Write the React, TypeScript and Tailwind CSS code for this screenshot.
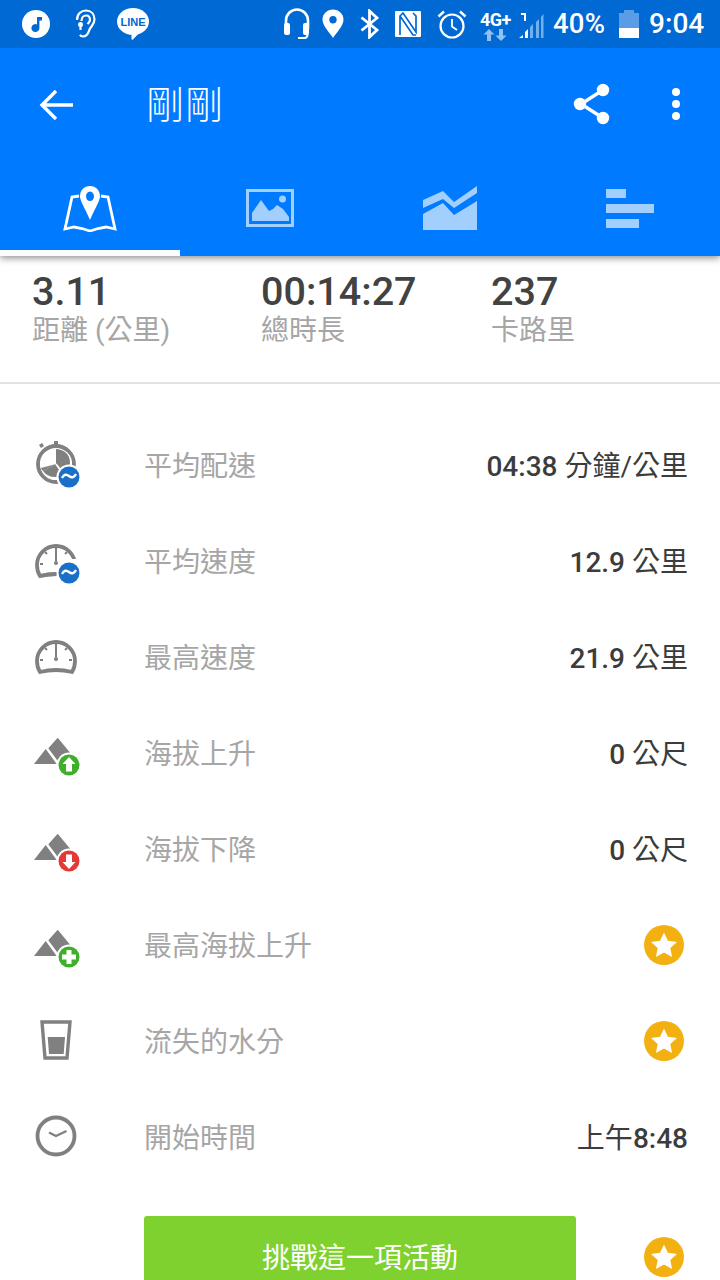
import React from 'react';

const FONT = "font-['Roboto','Noto_Sans_CJK_TC',sans-serif]";

function StatusBar() {
    return (
        <div className="h-[48px] bg-[#0069d3] flex items-center text-white">
            <svg width="28" height="28" viewBox="0 0 28 28" className="ml-[22px]">
                <circle cx="14" cy="14" r="14" fill="#fff" />
                <path d="M15 7h5v3.4h-2.6V18a4 4 0 1 1-2.4-3.6z" fill="#0069d3" />
            </svg>
            <svg width="22" height="30" viewBox="0 0 22 30" className="ml-[24px]" fill="none" stroke="#fff" strokeWidth="2.2">
                <path d="M3 11C3 5 7 1.500 12 1.500S20.500 5 20.500 10.500c0 5-3.500 6.500-5 10-1 3-2 7-6.500 7-1.500 0-2.500-.7-3-1.700" />
                <path d="M7.500 12c0-3.500 2-5.500 4.700-5.500S16 8.500 16 11c0 2-1.500 3-2.500 4" />
                <circle cx="6.500" cy="15.500" r="2.500" fill="#fff" stroke="none" />
                <path d="M6.500 15v6" />
            </svg>
            <svg width="32" height="32" viewBox="0 0 32 32" className="ml-[21px]">
                <ellipse cx="16" cy="13.500" rx="16" ry="13.500" fill="#fff" />
                <path d="M11 24l5 2 9-4-9 9.500c-.5.5-1.500.3-1.500-.5V26z" fill="#fff" />
                <text x="16" y="17.500" textAnchor="middle" fontSize="11" fontWeight="900" fill="#0069d3" fontFamily="Liberation Sans, sans-serif">LINE</text>
            </svg>

            <svg width="28" height="32" viewBox="0 0 28 32" className="ml-[134px]" fill="none" stroke="#fff">
                <path d="M3 21v-8.500a11 11 0 0 1 22 0V21" strokeWidth="2.600" />
                <rect x="1" y="15" width="6" height="12" rx="2" fill="#fff" stroke="none" />
                <rect x="20" y="15" width="6" height="12" rx="2" fill="#fff" stroke="none" />
                <path d="M24.500 26c0 3-1 4-3 4H15" strokeWidth="2.200" />
            </svg>
            <svg width="22" height="30" viewBox="0 0 22 30" className="ml-[11px]">
                <path fillRule="evenodd" d="M11 .5C5 .5.500 5 .500 10.500.500 17 8 24 11 29c3-5 10.500-12 10.500-18.500C21.500 5 17 .5 11 .5zm0 6.500a3.700 3.700 0 1 1 0 7.400 3.700 3.700 0 0 1 0-7.400z" fill="#fff" />
            </svg>
            <svg width="20" height="30" viewBox="0 0 20 30" className="ml-[16px]" fill="none" stroke="#fff" strokeWidth="2.800">
                <path d="M1.500 8.500L17 21l-7.500 7V2L17 9 1.500 21.500" />
            </svg>
            <svg width="26" height="26" viewBox="0 0 26 26" className="ml-[15px]">
                <rect width="26" height="26" rx="1" fill="#fff" />
                <path d="M5 24V5l3-3 13 19V5l-3-3M5 5l13 19h3" fill="none" stroke="#0069d3" strokeWidth="1.700" />
            </svg>
            <svg width="30" height="30" viewBox="0 0 30 30" className="ml-[16px]" fill="none" stroke="#fff" strokeWidth="2.200">
                <circle cx="15" cy="17" r="11.500" />
                <path d="M15 10v7.500l5 3.500" strokeWidth="1.800" />
                <path d="M1.500 7.500L7 2.500M28.500 7.500L23 2.500" strokeWidth="2.400" />
            </svg>
            <div className="relative w-[32px] h-[32px] ml-[13px]">
                <span className="absolute left-0 top-[3px] text-[18px] leading-[18px] font-bold font-['Roboto',sans-serif] tracking-[-0.5px]">4G+</span>
                <svg width="32" height="14" viewBox="0 0 32 14" className="absolute left-0 top-[20px]" fill="#8fc1f2">
                    <path d="M9 1l5.500 5.500H11V13H7V6.500H3.500zM21 13l-5.500-5.500H19V1h4v6.500h3.500z" />
                </svg>
            </div>
            <svg width="26" height="30" viewBox="0 0 26 30" className="ml-[6px]">
                <path d="M3 4h5v8H6V6H3z" fill="#fff" />
                <path d="M1 29l4-3v3zM7 29v-6l3-3v9z" fill="#fff" />
                <path d="M12 29V18l3-3v14zM18 29V13l3-3v19zM23 29V8l2.500-3v24z" fill="#72aff0" />
            </svg>
            <span className={`ml-[9px] text-[27.500px] leading-none font-medium tracking-[0.2px] ${FONT}`}>40%</span>
            <div className="ml-[14px] w-[20px] h-[28px] flex flex-col items-center">
                <div className="w-[10px] h-[3px] bg-[#5a9ce6]" />
                <div className="w-[20px] h-[15px] bg-[#5a9ce6]" />
                <div className="w-[20px] h-[10px] bg-white" />
            </div>
            <span className={`ml-[10px] text-[28px] leading-none font-medium ${FONT}`}>9:04</span>
        </div>
    );
}

function Toolbar() {
    return (
        <div className="h-[112px] flex items-start text-white">
            <svg width="36" height="36" viewBox="0 0 36 36" className="ml-[38px] mt-[39px]" fill="none" stroke="#fff" strokeWidth="3.400">
                <path d="M35 18H5M18 4L4 18l14 14" />
            </svg>
            <span className={`ml-[72px] mt-[32px] text-[38px] leading-[50px] font-light tracking-[1px] ${FONT}`}>剛剛</span>
            <svg width="38" height="42" viewBox="0 0 38 42" className="ml-[349px] mt-[35px]" fill="#fff" stroke="#fff" strokeWidth="3.400">
                <path d="M30 7L8 21l22 14" fill="none" />
                <circle cx="30" cy="7" r="4.500" />
                <circle cx="7" cy="21" r="4.500" />
                <circle cx="30" cy="35" r="4.500" />
            </svg>
            <div className="ml-[61px] mt-[40px] flex flex-col gap-[4px]">
                <div className="w-[8px] h-[8px] rounded-full bg-white" />
                <div className="w-[8px] h-[8px] rounded-full bg-white" />
                <div className="w-[8px] h-[8px] rounded-full bg-white" />
            </div>
        </div>
    );
}

function Tabs() {
    const dim = '#a3cfff';
    return (
        <div className="relative h-[96px]">
            <div className="grid grid-cols-4 h-[90px]">
                <div className="flex justify-center pt-[26px]">
                    <svg width="56" height="46" viewBox="0 0 56 46" fill="none">
                        <path d="M17 10l-7 1-7 32 9-2 8 1.500 8 2.500 8-2.500 8-1.500 9 2-7-32-7-1" stroke="#fff" strokeWidth="2.800" />
                        <path fillRule="evenodd" fill="#fff" d="M28 0c-6 0-10 4.500-10 10.500 0 4 4.500 11 10 23.500 5.500-12.500 10-19.500 10-23.500C38 4.500 34 0 28 0zm0 5.500c2.400 0 4 2.200 4 4.800s-1.600 4.800-4 4.800-4-2.200-4-4.800 1.600-4.800 4-4.800z" />
                    </svg>
                </div>
                <div className="flex justify-center pt-[29px]">
                    <svg width="48" height="38" viewBox="0 0 48 38" fill={dim}>
                        <path fillRule="evenodd" d="M0 0h48v38H0zm3 3v32h42V3z" />
                        <path d="M6 32V24l9-13 8 11 4-2 4-4 6 4 6 8v4z" />
                        <ellipse cx="36.500" cy="10" rx="3.500" ry="3.600" />
                    </svg>
                </div>
                <div className="flex justify-center pt-[26px]">
                    <svg width="54" height="44" viewBox="0 0 54 44" fill={dim}>
                        <path d="M0 14L20 5l11 11L54 0v7L31 22 20 13 0 22z" />
                        <path d="M0 28l20-11 11 12L54 15v29H0z" />
                    </svg>
                </div>
                <div className="flex justify-center pt-[29px]">
                    <div className="w-[48px] flex flex-col gap-[6px]">
                        <div className="w-[20px] h-[9px] bg-[#a3cfff]" />
                        <div className="w-[48px] h-[9px] bg-[#a3cfff]" />
                        <div className="w-[33px] h-[9px] bg-[#a3cfff]" />
                    </div>
                </div>
            </div>
            <div className="w-[180px] h-[6px] bg-white" />
        </div>
    );
}

function Summary({ value, label, className }: { value: string; label: string; className: string }) {
    return (
        <div className={className}>
            <div className="text-[39.500px] leading-[44px] font-medium text-[#424242]">{value}</div>
            <div className="text-[28px] leading-[34px] text-[#a6a6a6]">{label}</div>
        </div>
    );
}

function Badge({ color, children }: { color: string; children?: React.ReactNode }) {
    return (
        <>
            <circle cx="43" cy="42" r="12.500" fill="#fff" />
            <circle cx="43" cy="42" r="10.500" fill={color} />
            {children}
        </>
    );
}

const WAVE = <path d="M36 43c2-4 4.500-4 7-2s5 2 7-2" fill="none" stroke="#fff" strokeWidth="2.400" />;

function Gauge() {
    return (
        <>
            <path d="M14 45c-2-3-3-7-3-11a19 19 0 0 1 38 0c0 4-1 8-3 11-10-2.500-22-2.500-32 0z" fill="none" stroke="#808080" strokeWidth="3.800" />
            <path d="M30 17v13M14 33h3M43 33h3M19 21l2 2M41 21l-2 2" stroke="#808080" strokeWidth="2" />
            <circle cx="30" cy="32" r="2" fill="#808080" />
        </>
    );
}

function Mountains() {
    return <path d="M8 41l11.700-15L30.700 41zM22.300 25.300L31.700 14.700 46 32l-12 9z" fill="#808080" />;
}

const ICONS: React.ReactNode[] = [
    <>
        <circle cx="30" cy="29" r="18" fill="none" stroke="#808080" strokeWidth="3.800" />
        <path d="M28 6h4v5h-4zM13 10l3-2 2 3-3 2z" fill="#808080" />
        <path d="M30 29V14c7 0 14 5 14 13s-3 9-7 12zL17 36c-1-1-2-2-2-3z" fill="#808080" />
        <path d="M30 29l-13 7c3 4 7 6 12 6 3 0 5-1 7-2z" fill="#808080" />
        <path d="M30 29l8 11" stroke="#fff" strokeWidth="1.800" />
        <Badge color="#1a6fc9">{WAVE}</Badge>
    </>,
    <>
        <Gauge />
        <path d="M30 46l22 4V28l-14 0z" fill="#fff" />
        <path d="M14 45c5-1.200 11-1.800 16-1.800" fill="none" stroke="#808080" strokeWidth="3.800" />
        <Badge color="#1a6fc9">{WAVE}</Badge>
    </>,
    <Gauge />,
    <>
        <Mountains />
        <Badge color="#3fae2a">
            <path d="M43 34l6.500 7H46v7.500h-6V41h-3.500z" fill="#fff" />
        </Badge>
    </>,
    <>
        <Mountains />
        <Badge color="#e53935">
            <path d="M43 50l6.500-7H46v-7.500h-6V43h-3.500z" fill="#fff" />
        </Badge>
    </>,
    <>
        <Mountains />
        <Badge color="#3fae2a">
            <path d="M40.500 35h5v4.500H50v5h-4.500V49h-5v-4.500H36v-5h4.500z" fill="#fff" />
        </Badge>
    </>,
    <>
        <path d="M16 11h28l-3 36H19z" fill="none" stroke="#808080" strokeWidth="3.400" />
        <path d="M21.700 26h17.300l-1.300 17H23z" fill="#808080" />
    </>,
    <>
        <circle cx="30" cy="29" r="18.500" fill="none" stroke="#808080" strokeWidth="3.800" />
        <path d="M23 25.500l7 3.500 10.500-5" fill="none" stroke="#808080" strokeWidth="2.200" />
    </>,
];

function Star() {
    return (
        <svg width="40" height="40" viewBox="0 0 40 40" className="shrink-0">
            <circle cx="20" cy="20" r="20" fill="#f2b111" />
            <path d="M20 7.500l3.900 8.300 9.100 1.100-6.700 6.200 1.800 9-8.100-4.500-8.100 4.500 1.800-9L7 16.900l9.100-1.100z" fill="#fff" />
        </svg>
    );
}

function Num({ children }: { children: string }) {
    return <span className="font-medium">{children}</span>;
}

const ROWS: { label: string; value: React.ReactNode; star?: boolean }[] = [
    { label: '平均配速', value: <><Num>04:38</Num> 分鐘/公里</> },
    { label: '平均速度', value: <><Num>12.9</Num> 公里</> },
    { label: '最高速度', value: <><Num>21.9</Num> 公里</> },
    { label: '海拔上升', value: <><Num>0</Num> 公尺</> },
    { label: '海拔下降', value: <><Num>0</Num> 公尺</> },
    { label: '最高海拔上升', value: <Star />, star: true },
    { label: '流失的水分', value: <Star />, star: true },
    { label: '開始時間', value: <>上午<Num>8:48</Num></> },
];

export default function App() {
    return (
        <div className={`w-[720px] h-[1280px] overflow-hidden bg-white ${FONT}`}>
            <div className="relative z-10 bg-[#007aff] shadow-[0_2px_7px_rgba(0,0,0,0.45)]">
                <StatusBar />
                <Toolbar />
                <Tabs />
            </div>

            <div className="h-[128px] flex pt-[14px] pl-[32px] border-b-2 border-b-[#e2e2e2]">
                <Summary value="3.11" label="距離 (公里)" className="w-[229px]" />
                <Summary value="00:14:27" label="總時長" className="w-[230px]" />
                <Summary value="237" label="卡路里" className="w-[200px]" />
            </div>

            <div className="pt-[33px]">
                {ROWS.map((row, i) => (
                    <div key={row.label} className="h-[96px] flex items-center pl-[26px] pr-[32px]">
                        <svg width="60" height="60" viewBox="0 0 60 60" className="shrink-0">
                            {ICONS[i]}
                        </svg>
                        <span className="ml-[59px] -translate-x-px pt-[4px] text-[28px] text-[#a6a6a6]">{row.label}</span>
                        {row.star ? (
                            <span className="ml-auto mr-[4px]">{row.value}</span>
                        ) : (
                            <span className="ml-auto pt-[4px] text-[28px] text-[#3c3c3c] whitespace-pre">{row.value}</span>
                        )}
                    </div>
                ))}
            </div>

            <div className="mt-[31px] flex items-start pl-[144px]">
                <div className="w-[432px] h-[82px] rounded-[3px] pt-[4px] bg-[#7ed12e] text-white text-[28px] flex items-center justify-center">
                    挑戰這一項活動
                </div>
                <div className="ml-[68px] mt-[21px]">
                    <Star />
                </div>
            </div>
        </div>
    );
}
